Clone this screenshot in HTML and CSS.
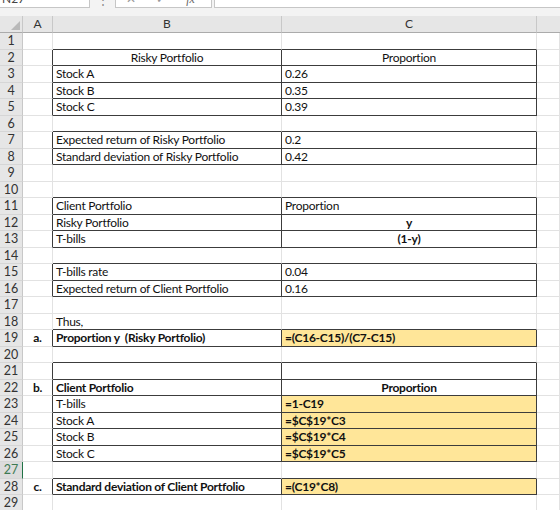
FILE: index.html
```html
<!DOCTYPE html>
<html lang="en">
<head>
    <meta charset="UTF-8">
    <title>Client Portfolio</title>
    <link rel="stylesheet" href="styles.css">
</head>
<body>
    <div class="fbar">
        <div class="namebox">N27</div>
        <div class="dots">&#8942;</div>
        <div class="fxbox"><span>&#10005;</span><span>&#10003;</span><span class="fx">fx</span></div>
        <div class="formula"></div>
    </div>
    <div class="gap"></div>

    <div class="sheet">
        <!-- column headers -->
        <div class="corner"><span class="tri"></span></div>
        <div class="ch">A</div>
        <div class="ch">B</div>
        <div class="ch">C</div>
        <div class="ch last"></div>

        <div class="rh">1</div><div class="c"></div><div class="c b"></div><div class="c b"></div><div class="c"></div>
        <div class="rh">2</div><div class="c r"></div><div class="c b r ctr">Risky Portfolio</div><div class="c b r ctr">Proportion</div><div class="c"></div>
        <div class="rh">3</div><div class="c r"></div><div class="c b r">Stock A</div><div class="c b r">0.26</div><div class="c"></div>
        <div class="rh">4</div><div class="c r"></div><div class="c b r">Stock B</div><div class="c b r">0.35</div><div class="c"></div>
        <div class="rh">5</div><div class="c r"></div><div class="c b r">Stock C</div><div class="c b r">0.39</div><div class="c"></div>
        <div class="rh">6</div><div class="c"></div><div class="c b"></div><div class="c b"></div><div class="c"></div>
        <div class="rh">7</div><div class="c r"></div><div class="c b r">Expected return of Risky Portfolio</div><div class="c b r">0.2</div><div class="c"></div>
        <div class="rh">8</div><div class="c r"></div><div class="c b r">Standard deviation of Risky Portfolio</div><div class="c b r">0.42</div><div class="c"></div>
        <div class="rh">9</div><div class="c"></div><div class="c"></div><div class="c"></div><div class="c"></div>
        <div class="rh">10</div><div class="c"></div><div class="c b"></div><div class="c b"></div><div class="c"></div>
        <div class="rh">11</div><div class="c r"></div><div class="c b r">Client Portfolio</div><div class="c b r">Proportion</div><div class="c"></div>
        <div class="rh">12</div><div class="c r"></div><div class="c b r">Risky Portfolio</div><div class="c b r ctr bold">y</div><div class="c"></div>
        <div class="rh">13</div><div class="c r"></div><div class="c b r">T-bills</div><div class="c b r ctr bold">(1-y)</div><div class="c"></div>
        <div class="rh">14</div><div class="c"></div><div class="c b"></div><div class="c b"></div><div class="c"></div>
        <div class="rh">15</div><div class="c r"></div><div class="c b r">T-bills rate</div><div class="c b r">0.04</div><div class="c"></div>
        <div class="rh">16</div><div class="c r"></div><div class="c b r">Expected return of Client Portfolio</div><div class="c b r">0.16</div><div class="c"></div>
        <div class="rh">17</div><div class="c"></div><div class="c"></div><div class="c"></div><div class="c"></div>
        <div class="rh">18</div><div class="c"></div><div class="c b">Thus,</div><div class="c b"></div><div class="c"></div>
        <div class="rh">19</div><div class="c r bold ctr">a.</div><div class="c b r bold">Proportion y&nbsp; (Risky Portfolio)</div><div class="c b r bold hl">=(C16-C15)/(C7-C15)</div><div class="c"></div>
        <div class="rh">20</div><div class="c"></div><div class="c b"></div><div class="c b"></div><div class="c"></div>
        <div class="rh">21</div><div class="c r"></div><div class="c b r"></div><div class="c b r"></div><div class="c"></div>
        <div class="rh">22</div><div class="c r bold ctr">b.</div><div class="c b r bold">Client Portfolio</div><div class="c b r bold ctr">Proportion</div><div class="c"></div>
        <div class="rh">23</div><div class="c r"></div><div class="c b r">T-bills</div><div class="c b r bold hl">=1-C19</div><div class="c"></div>
        <div class="rh">24</div><div class="c r"></div><div class="c b r">Stock A</div><div class="c b r bold hl">=$C$19*C3</div><div class="c"></div>
        <div class="rh">25</div><div class="c r"></div><div class="c b r">Stock B</div><div class="c b r bold hl">=$C$19*C4</div><div class="c"></div>
        <div class="rh">26</div><div class="c r"></div><div class="c b r">Stock C</div><div class="c b r bold hl">=$C$19*C5</div><div class="c"></div>
        <div class="rh sel">27</div><div class="c"></div><div class="c b"></div><div class="c b"></div><div class="c"></div>
        <div class="rh">28</div><div class="c r bold ctr">c.</div><div class="c b r bold">Standard deviation of Client Portfolio</div><div class="c b r bold hl">=(C19*C8)</div><div class="c"></div>
        <div class="rh">29</div><div class="c"></div><div class="c"></div><div class="c"></div><div class="c"></div>
    </div>
</body>
</html>
```

FILE: styles.css
```css
body {
    margin: 0;
    background: #fff;
    font-family: "Lato", "Liberation Sans", sans-serif;
    overflow: hidden;
}
.fbar {
    display: flex;
    align-items: flex-end;
    height: 8px;
    overflow: hidden;
    background: #f3f3f3;
    font-size: 12px;
    color: #444;
}
.namebox {
    width: 90px;
    height: 22px;
    line-height: 24px;
    padding-left: 2px;
    box-sizing: border-box;
    background: #fff;
    border: 1px solid #c6c6c6;
    border-left: none;
}
.dots {
    width: 25px;
    height: 20px;
    line-height: 24px;
    text-align: center;
    color: #888;
}
.fxbox {
    display: flex;
    justify-content: space-around;
    width: 97px;
    height: 22px;
    line-height: 24px;
    padding-right: 6px;
    box-sizing: border-box;
    background: #fff;
    border: 1px solid #c6c6c6;
    color: #999;
}
.fxbox .fx {
    font-style: italic;
    font-family: "Liberation Serif", serif;
    color: #666;
}
.formula {
    flex: 1;
    height: 22px;
    margin-left: 2px;
    box-sizing: border-box;
    background: #fff;
    border: 1px solid #c6c6c6;
    border-right: none;
}
.gap {
    height: 8px;
    background: #f3f3f3;
}
.sheet {
    display: grid;
    grid-template-columns: 23px 30px 229px 255px 1fr;
    grid-template-rows: 17px;
    grid-auto-rows: 16.5px;
    font-size: 12px;
    color: #111;
}
.sheet > div {
    box-sizing: border-box;
    white-space: nowrap;
    overflow: hidden;
}
.corner {
    position: relative;
    background: #e6e6e6;
    border-right: 1px solid #c8c8c8;
    border-bottom: 1px solid #ababab;
}
.corner .tri {
    position: absolute;
    right: 2px;
    bottom: 2px;
    width: 0;
    height: 0;
    border-left: 9px solid transparent;
    border-bottom: 9px solid #b9b9b9;
}
.ch {
    background: #e6e6e6;
    border-right: 1px solid #c8c8c8;
    border-bottom: 1px solid #ababab;
    text-align: center;
    line-height: 16px;
    color: #333;
}
.ch.last {
    border-right: none;
}
.rh {
    background: #e6e6e6;
    border-right: 1px solid #c8c8c8;
    border-bottom: 1px solid #d6d6d6;
    text-align: center;
    line-height: 16px;
    font-size: 12.5px;
    color: #333;
}
.rh.sel {
    background: #dcdcdc;
    color: #3d7a52;
    border-right: 1px solid #217346;
}
.c {
    border-right: 1px solid #e2e2e2;
    border-bottom: 1px solid #e2e2e2;
    padding: 0 3px;
    line-height: 16px;
    letter-spacing: -0.25px;
}
.c.b {
    border-bottom-color: #3c3c3c;
}
.c.r {
    border-right-color: #3c3c3c;
}
.ctr {
    text-align: center;
}
.bold {
    font-weight: bold;
}
.hl {
    background: #ffe699;
}
```
